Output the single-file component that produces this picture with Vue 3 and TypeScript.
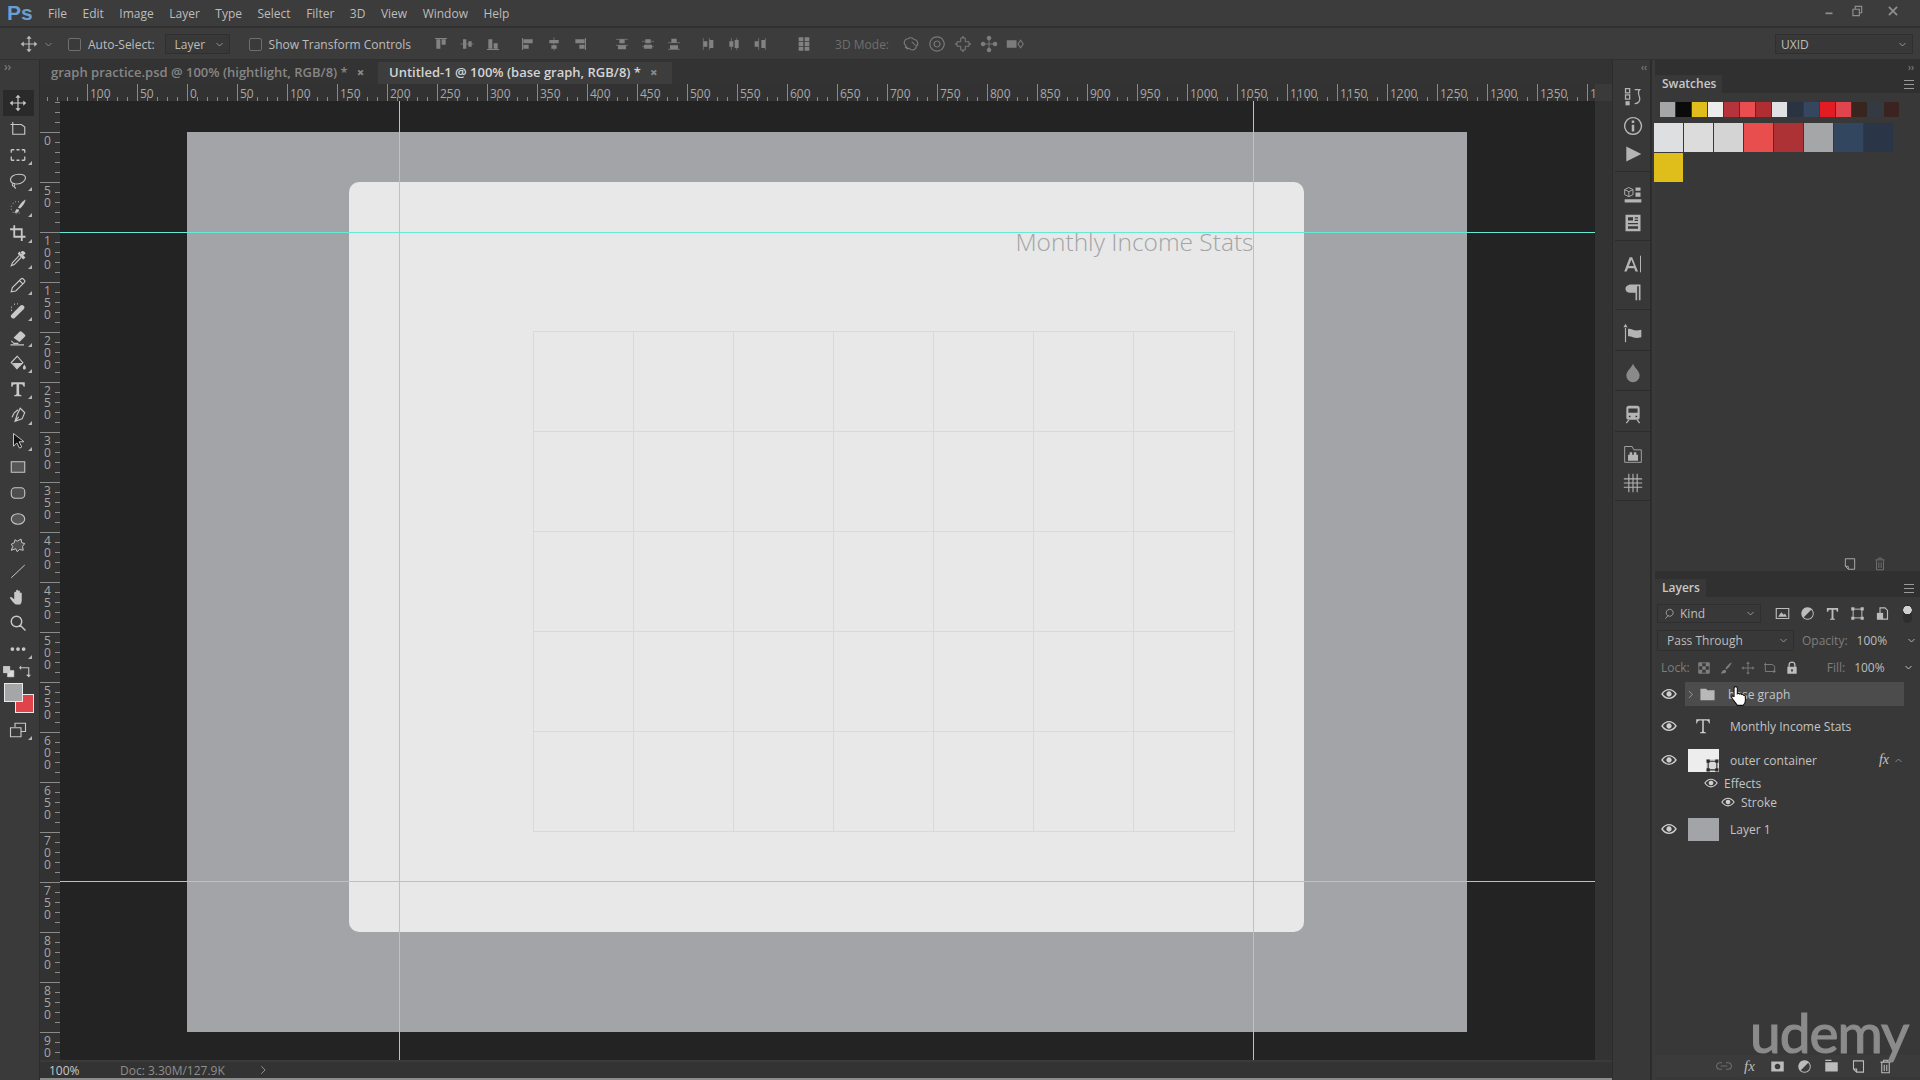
<template>
  <div class="app">
    <!-- menu bar -->
    <header class="menubar">
      <span class="ps-logo">Ps</span>
      <nav class="menu">
        <span v-for="m in menus" :key="m">{{ m }}</span>
      </nav>
      <div class="win-controls">
        <Icon name="winMin" :size="14" />
        <Icon name="winMax" :size="14" />
        <Icon name="winClose" :size="14" class="win-close" />
      </div>
    </header>

    <!-- options bar -->
    <div class="options">
      <Icon name="move" :size="18" class="opt-move" />
      <Icon name="chev" :size="9" class="opt-chev" />
      <span class="check first"></span>
      <span class="opt-label">Auto-Select:</span>
      <div class="select layer-select"><span>Layer</span><Icon name="chev" :size="9" /></div>
      <span class="check"></span>
      <span class="opt-label">Show Transform Controls</span>
      <div v-for="(g, i) in alignGroups" :key="i" class="align-group" :class="'ag' + i">
        <Icon v-for="n in g" :key="n" :name="n" :size="16" />
      </div>
      <span class="mode-label">3D Mode:</span>
      <div class="align-group mode-icons">
        <Icon v-for="n in modeIcons" :key="n" :name="n" :size="18" />
      </div>
      <div class="select workspace"><span>UXID</span><Icon name="chev" :size="9" /></div>
    </div>

    <div class="workspace-row">
      <!-- tools -->
      <aside class="tools">
        <div class="dock-arrows">››</div>
        <div
          v-for="t in tools"
          :key="t.name"
          class="tool"
          :class="{ active: t.name === 'move', more: t.more }"
        >
          <Icon :name="t.name" :size="18" />
        </div>
        <div class="color-mini">
          <Icon name="defaultColors" :size="13" />
          <Icon name="swapColors" :size="13" />
        </div>
        <div class="color-chips">
          <span class="chip bg"></span>
          <span class="chip fg"></span>
        </div>
        <div class="tool more screen"><Icon name="screen" :size="18" /></div>
      </aside>

      <!-- document -->
      <main class="doc-area">
        <div class="tabs">
          <div class="tab">
            <span>graph practice.psd @ 100% (hightlight, RGB/8) *</span><b>×</b>
          </div>
          <div class="tab on">
            <span>Untitled-1 @ 100% (base graph, RGB/8) *</span><b>×</b>
          </div>
        </div>

        <svg class="h-ruler" width="1555" height="17">
          <path :d="hTicks" class="tick" />
          <text v-for="l in hLabels" :key="l.x" :x="l.x + 3" y="14" class="rule-text">{{ l.text }}</text>
        </svg>

        <div class="canvas-row">
          <svg class="v-ruler" width="20" height="959">
            <path :d="vTicks" class="tick" />
            <g v-for="l in vLabels" :key="l.y">
              <text
                v-for="(c, i) in l.text"
                :key="i"
                x="4"
                :y="l.y + 13 + i * 12"
                class="rule-text"
              >{{ c }}</text>
            </g>
          </svg>

          <div class="canvas">
            <div class="document">
              <section class="card">
                <h1 class="card-title">Monthly Income Stats</h1>
                <div class="grid">
                  <i v-for="n in 35" :key="n"></i>
                </div>
              </section>
            </div>
            <span class="guide gv gv1"></span>
            <span class="guide gv gv2"></span>
            <span class="guide gh gh1"></span>
            <span class="guide gh gh2"></span>
          </div>
          <div class="v-scroll"></div>
        </div>

        <footer class="status">
          <span class="zoom">100%</span>
          <span class="doc-size">Doc: 3.30M/127.9K</span>
          <Icon name="chevR" :size="10" class="status-arrow" />
        </footer>
        <div class="bottom-strip"></div>
      </main>

      <!-- collapsed panel icons -->
      <div class="strip">
        <div class="dock-arrows strip-arrows">‹‹</div>
        <div v-for="(g, i) in stripGroups" :key="i" class="strip-group">
          <Icon v-for="n in g" :key="n" :name="n" :size="20" :class="{ 'dim-drop': n === 'drop' }" />
        </div>
      </div>

      <!-- panels -->
      <div class="panels">
        <div class="dock-arrows panels-arrows">››</div>

        <section class="panel swatches">
          <div class="panel-head">
            <span class="panel-tab">Swatches</span>
            <span class="burger"></span>
          </div>
          <div class="swatch-body">
            <div class="swatch-small">
              <i v-for="(c, i) in smallSwatches" :key="i" :style="{ background: c }"></i>
            </div>
            <div class="swatch-big">
              <i v-for="(c, i) in bigSwatches" :key="i" :style="{ background: c }"></i>
            </div>
            <div class="swatch-foot">
              <Icon name="newDoc" :size="14" />
              <Icon name="trash" :size="14" class="dim" />
            </div>
          </div>
        </section>

        <section class="panel layers">
          <div class="panel-head">
            <span class="panel-tab">Layers</span>
            <span class="burger"></span>
          </div>

          <div class="l-row filter-row">
            <div class="select kind">
              <Icon name="search" :size="12" />
              <span>Kind</span>
              <Icon name="chev" :size="9" />
            </div>
            <div class="filter-icons">
              <Icon v-for="n in filterIcons" :key="n" :name="n" :size="15" />
            </div>
            <span class="toggle"></span>
          </div>

          <div class="l-row blend-row">
            <div class="select blend"><span>Pass Through</span><Icon name="chev" :size="9" /></div>
            <span class="l-label opacity">Opacity:</span>
            <span class="pct">100%</span>
            <Icon name="chev" :size="9" />
          </div>

          <div class="l-row lock-row">
            <span class="l-label">Lock:</span>
            <div class="lock-icons">
              <Icon v-for="n in lockIcons" :key="n" :name="n" :size="14" />
            </div>
            <span class="l-label fill">Fill:</span>
            <span class="pct">100%</span>
            <Icon name="chev" :size="9" />
          </div>

          <div class="layer-list">
            <div class="layer selected">
              <Icon name="eye" :size="16" class="eye" />
              <Icon name="chevR" :size="9" class="twisty" />
              <Icon name="folder" :size="17" class="folder" />
              <span class="name base">base graph</span>
              <svg class="pointer" width="18" height="22" viewBox="0 0 16 20">
                <path d="M5 1.5c1 0 1.5.6 1.5 1.5v5l.6-.3c.7-.2 1.2 0 1.5.5.6-.4 1.4-.3 1.8.4.7-.3 1.5 0 1.8.7.8-.2 1.6.3 1.6 1.2v3.5c0 2-1 3.500-2 4.500H6.500L2 12.500c-1-1.200-.8-2.300.2-2.500.7-.1 1.300.3 1.300.8V3c0-.9.600-1.500 1.500-1.500z" fill="#fff" stroke="#111" stroke-width="1" />
              </svg>
            </div>
            <div class="layer">
              <Icon name="eye" :size="16" class="eye" />
              <span class="thumb-t"><Icon name="typeThin" :size="18" /></span>
              <span class="name">Monthly Income Stats</span>
            </div>
            <div class="layer">
              <Icon name="eye" :size="16" class="eye" />
              <span class="thumb light"><Icon name="smart" :size="13" class="thumb-badge" /></span>
              <span class="name">outer container</span>
              <em class="fx">fx</em>
              <Icon name="chevU" :size="9" class="fx-arrow" />
            </div>
            <div class="layer sub">
              <Icon name="eye" :size="14" class="eye sub1" />
              <span>Effects</span>
            </div>
            <div class="layer sub">
              <Icon name="eye" :size="14" class="eye sub2" />
              <span>Stroke</span>
            </div>
            <div class="layer">
              <Icon name="eye" :size="16" class="eye" />
              <span class="thumb grey"></span>
              <span class="name">Layer 1</span>
            </div>
          </div>

          <div class="layers-spacer"></div>
          <div class="layers-foot">
            <Icon name="link" :size="16" class="dim" />
            <em class="foot-fx">fx</em>
            <Icon v-for="n in footIcons" :key="n" :name="n" :size="15" />
          </div>
        </section>
        <span class="watermark">udemy</span>
      </div>
    </div>
  </div>
</template>

<script setup lang="ts">
import { computed, h } from 'vue';

interface IconDef {
  s?: string; // stroked outline
  f?: string; // filled shape
  sfill?: string; // fill under the outline
  w?: number;
}

const icons: Record<string, IconDef> = {
  // tools
  move: { s: 'M12 4v16M4 12h16', f: 'M12 1l3.500 4h-7zM12 23l-3.500-4h7zM1 12l4-3.500v7zM23 12l-4 3.500v-7z', w: 1.6 },
  artboard: { s: 'M2 6h6M5 2.500V19h16V9.500L16.500 6H8', w: 1.5 },
  marquee: { s: 'M3 5h4M10 5h4M17 5h4M3 19h4M10 19h4M17 19h4M3 5v4M3 14v5M21 5v4M21 14v5', w: 1.7 },
  lasso: { s: 'M2 10c0-4 5-7 11-7s9 2 9 5-5 8-11 8-9-2-9-6zM6 15c-2 1-2 4 0 4s2-3 1-4M7 19c0 1 1 2 2 3', w: 1.5 },
  quick: { s: 'M5 7h1M2.500 11h1M2.500 15h1M5 19h1M9 21h1M13 20h1M8 5h1M12 5h1', f: 'M12 13c2-4 6-9 10-11 0 4-4 9-7 12zM10.500 14.500c2 0 3.500 1 2.500 3s-3.500 2.500-6 2c1.500-1 1.500-4 3.500-5z', w: 1.6 },
  crop: { s: 'M7 1.500V17h15M1.500 7H17v15.500', w: 2.4 },
  dropper: { s: 'M13.500 7.500L4.500 17l-1.500 4 4-1.500 9-9.500', f: 'M14 2l8 8-3 2.500-7.500-7.500zM17 1.500c2-1 4.500 1 5 3l-2.500 2.500-5-3z', w: 1.5 },
  pencil: { s: 'M3 21l1.500-5.500L16 4c1-1 2-1 3 0l1.500 1.500c1 1 1 2 0 3L9 20zM14 6l4.500 4.500', w: 1.5 },
  heal: { s: 'M3 7h1M7 3h1M3 11h1M11 2.500h1', f: 'M3.500 16.500L15 5c1.500-1.500 3-1.500 4.500 0s1.500 3 0 4.500L8 21c-1.500 1.500-3 1.500-4.500 0s-1.500-3 0-4.500z', w: 1.7 },
  eraser: { s: 'M3 17l3.500 3.500h6M2 22.500h18', f: 'M6 13l8-8c1-1 2-1 3 0l4 3.500c1 1 1 2 0 3l-7 7z', w: 1.4 },
  bucket: { s: 'M11 3L3 11.500l7.500 8 8-8z', f: 'M5 12h13l-7.500 7.500zM20.500 14c1 2 2 3 2 4.500a2 2 0 0 1-4 0c0-1.500 1-2.500 2-4.500z', w: 1.5 },
  type: { f: 'M3 3h18v6h-1.500c-.5-2.500-1.500-3.500-3.500-3.500h-2.500V18c0 1.500 1 2 3 2v1.500H7V20c2 0 3-.5 3-2V5.500H8C6 5.500 5 6.500 4.500 9H3z' },
  pen: { s: 'M15 3l6 6-3.500 8L8 20.500 11 11zM8 20.500l5-6M4 15l3-6 5-4', w: 1.5 },
  path: { s: 'M6 2v17l4.500-4.500 3.500 7 3-1.500-3.500-7H20z', sfill: '#141414', w: 1.3 },
  rect: { s: 'M3 5h18v14H3z', sfill: '#565656', w: 1.4 },
  rrect: { s: 'M8 5h8a5 5 0 0 1 5 5v4a5 5 0 0 1-5 5H8a5 5 0 0 1-5-5v-4a5 5 0 0 1 5-5z', sfill: '#4e4e4e', w: 1.4 },
  ellipse: { s: 'M12 5c5 0 9 3 9 7s-4 7-9 7-9-3-9-7 4-7 9-7z', sfill: '#565656', w: 1.4 },
  splat: { s: 'M8 5l3 2 5-3 1 5 4 1-3 4 1 5-5-1-3 3-2-4-6 2 2-5-2-3 4-2z', sfill: '#4e4e4e', w: 1.3 },
  line: { s: 'M3 21L21 4', w: 1.3 },
  hand: { f: 'M9 22c-3-2-6-6-8-9 1-1.500 2.500-1 3.500 0L7 15V6c0-1.500 2.500-1.500 2.500 0v5V3.500c0-1.500 2.500-1.500 2.500 0V11V4.500c0-1.500 2.500-1.500 2.500 0V12V7c0-1.500 2.500-1.500 2.500 0v9c0 3-1 5-2 6z' },
  zoom: { s: 'M10 3a7 7 0 1 0 0 14 7 7 0 0 0 0-14zM15 15l7 7', w: 1.9 },
  dots: { f: 'M2 12a2.500 2.500 0 1 0 5 0 2.500 2.500 0 1 0-5 0zM9.500 12a2.500 2.500 0 1 0 5 0 2.500 2.500 0 1 0-5 0zM17 12a2.500 2.500 0 1 0 5 0 2.500 2.500 0 1 0-5 0z' },
  screen: { s: 'M8 8V3h14v11h-6M2 9h14v12H2z', w: 1.5 },
  defaultColors: { s: 'M10 10h12v12H10z', f: 'M2 2h13v13H2z', sfill: '#ddd', w: 1 },
  swapColors: { s: 'M4 5h14v14M14 19h4', f: 'M4 1v8L0 5zM18 23l-4-5h8z', w: 2 },
  // align
  aTop: { f: 'M3 3h18v1.500H3zM5 5h6v14H5zM13 5h6v8h-6z' },
  aMid: { s: 'M2 12h20', f: 'M6 5h5v14H6zM14 8h5v8h-5z', w: 1 },
  aBot: { f: 'M3 19.500h18V21H3zM5 5h6v14H5zM13 11h6v8h-6z' },
  aLeft: { f: 'M3 3h1.500v18H3zM5 5h14v6H5zM5 13h8v6H5z' },
  aCen: { s: 'M12 2v20', f: 'M5 6h14v5H5zM8 14h8v5H8z', w: 1 },
  aRight: { f: 'M19.500 3H21v18h-1.500zM5 5h14v6H5zM11 13h8v6h-8z' },
  dTop: { s: 'M3 5h18M3 14h18', f: 'M8 5h8v6H8zM6 14h12v6H6z', w: 1 },
  dMid: { s: 'M3 8h18M3 16h18', f: 'M8 5h8v6H8zM6 13h12v6H6z', w: 1 },
  dBot: { s: 'M3 10h18M3 20h18', f: 'M8 4h8v6H8zM6 14h12v6H6z', w: 1 },
  dLeft: { s: 'M5 3v18M14 3v18', f: 'M5 8h6v8H5zM14 6h6v12h-6z', w: 1 },
  dCen: { s: 'M8 3v18M16 3v18', f: 'M5 8h6v8H5zM13 6h6v12h-6z', w: 1 },
  dRight: { s: 'M10 3v18M20 3v18', f: 'M4 8h6v8H4zM14 6h6v12h-6z', w: 1 },
  autoAlign: { f: 'M4 2h7v6H4zM13 2h7v6h-7zM4 9h7v6H4zM13 9h7v6h-7zM4 16h7v6H4zM13 16h7v6h-7z' },
  // 3d
  orbit: { s: 'M5 14a5 5 0 0 1 3-9 5.500 5.500 0 0 1 8 1 5 5 0 0 1 3 9 5 5 0 0 1-9 3 5 5 0 0 1-5-4zM4 16l4 3M13 9l5 5', w: 1.4 },
  roll: { s: 'M12 2.500a9.500 9.500 0 1 0 .1 0M12 8a4 4 0 1 0 .1 0', w: 1.5 },
  pan3d: { s: 'M9 4h6v5h5v6h-5v5H9v-5H4V9h5z', f: 'M12 1l2 2.500h-4zM12 23l-2-2.500h4zM1 12l2.500-2v4zM23 12l-2.500 2v-4z', w: 1.3 },
  slide3d: { s: 'M12 5v14M5 12h14', f: 'M12 1a3 3 0 1 0 .1 0M12 17a3 3 0 1 0 .1 0M4 9a3 3 0 1 0 .1 0M20 9a3 3 0 1 0 .1 0', w: 1.2 },
  cam3d: { s: 'M19.500 7L23 12l-3.500 5-3.500-5z', f: 'M1 7h13v10H1z', w: 1.4 },
  // strip
  history: { s: 'M3 2h5v5H3zM3 9.500h5v5H3zM14 3h6c-3 3-1 7 0 10 1 4-2 7-6 7', f: 'M3 17h5v5H3z', w: 1.5 },
  info: { s: 'M12 2a10 10 0 1 0 .1 0', f: 'M10.500 5.500h3v3h-3zM10.500 10.500h3v8h-3z', w: 1.7 },
  play: { f: 'M4 3l18 9-18 9z' },
  cube: { s: 'M7 3l5 2.500v6L7 14l-5-2.500v-6zM2 5.500L7 8l5-2.500M7 8v6', f: 'M15 3h6v4h-6zM15 9h6v5h-6zM2 17h20v4H2z', w: 1.1 },
  props: { f: 'M3 2h18v20H3zM6 5v4h6V5zM14 5v1.500h4V5zM14 8v1.500h4V8zM6 12v1.500h12V12zM6 16v3h12v-3z' },
  charA: { s: 'M21 2v20', f: 'M8 4h3l7 17h-3l-1.500-4H6l-1.500 4h-3zM7 14.500h6L10 7z', w: 1.2 },
  para: { f: 'M10 3h11v19h-2V5h-2v17h-2V13h-5C4 13 3 10 3 8s2-5 7-5z' },
  flag: { s: 'M3 6v17', f: 'M3 1l2.500 4h-5zM6 7c5 0 6 2 10 2 2 0 4-.5 6-1v9c-2 .5-4 1-6 1-4 0-5-2-10-2z', w: 1.4 },
  drop: { f: 'M12 1c2 5 8 9 8 14a8 8 0 0 1-16 0c0-5 6-9 8-14z' },
  train: { s: 'M4 23l3-4M20 23l-3-4', f: 'M7 2h10c2 0 3 1 3 3v11c0 2-1 3-3 3H7c-2 0-3-1-3-3V5c0-2 1-3 3-3zM6.500 5.500v5h11v-5zM7 14v2h2v-2zM15 14v2h2v-2z', w: 1.6 },
  bagFolder: { s: 'M2 3h9l2 4h9v15H2z', f: 'M6 13h12v7H6zM8 10h3v3H8zM13 10h3v3h-3z', w: 1 },
  gridOn: { s: 'M1 7h22M1 12h22M1 17h22M7 1v22M12 1v22M17 1v22', w: 1.3 },
  // layers
  search: { s: 'M14 3a7 7 0 1 0 0 13 7 7 0 0 0 0-13zM9 14l-6 7', w: 2 },
  fImg: { s: 'M2 4h20v16H2z', f: 'M5 17l5-7 4 4 2-2 3 5z', w: 1.8 },
  fAdj: { f: 'M12 2a10 10 0 1 0 .1 0zM18 6L6 18a8 8 0 0 0 12-12z' },
  fText: { f: 'M3 3h18v6h-2c-.5-2-1-3-3-3h-2.500v13c0 1 1 1.500 2.500 1.500V22H8v-1.500c1.500 0 2.500-.5 2.500-1.500V6H8c-2 0-2.500 1-3 3H3z' },
  fShape: { s: 'M5 5h14v14H5z', f: 'M2 2h5v5H2zM17 2h5v5h-5zM2 17h5v5H2zM17 17h5v5h-5z', w: 1.6 },
  fSmart: { s: 'M8 11V3h8l4 4v14h-8', f: 'M3 11h10v11H3z', w: 1.8 },
  lChecker: { s: 'M3 3h18v18H3z', f: 'M3 3h6v6H3zM15 3h6v6h-6zM9 9h6v6H9zM3 15h6v6H3zM15 15h6v6h-6z', w: 1.5 },
  lBrush: { f: 'M11 13C14 8 18 4 22 2c-1 4-5 9-9 12.500zM9 15c2 0 4 1.500 3 4s-5 3-9 2c2-1 2-5 6-6z' },
  lMove: { s: 'M12 4v16M4 12h16', f: 'M12 1l3 3.500H9zM12 23l-3-3.500h6zM1 12l3.500-3v6zM23 12l-3.500 3V9z', w: 1.4 },
  lArt: { s: 'M2 6h5M4 3v15h16V9l-4-3H7', f: 'M18 15l4 3-4 3z', w: 1.6 },
  lLock: { s: 'M7 11V7a5 5 0 0 1 10 0v4', f: 'M4 10h16v12H4zM10.500 14v4h3v-4z', w: 2.2 },
  eye: { s: 'M1.500 12C5 7 9 5.500 12 5.500s7 1.500 10.500 6.500c-3.500 5-7.500 6.500-10.500 6.500S5 17 1.500 12z', f: 'M12 8a4 4 0 1 0 .1 0z', w: 2 },
  folder: { f: 'M2 4h8l2 2h10v14H2z' },
  typeThin: { f: 'M3 3h18v5.500h-1c-.5-2.500-1.500-4-3.500-4H13V19c0 1 1 1.500 3 1.500v1H8v-1c2 0 3-.5 3-1.500V4.500H7.500c-2 0-3 1.500-3.500 4H3z' },
  smart: { s: 'M4 4h16v16H4z', f: 'M1 1h6v6H1zM17 1h6v6h-6zM1 17h6v6H1zM17 17h6v6h-6z', sfill: 'none', w: 2 },
  link: { s: 'M9 7H6a5 5 0 0 0 0 10h3M15 7h3a5 5 0 0 1 0 10h-3M7 12h10', w: 1.6 },
  mask: { f: 'M2 4h20v16H2zM12 7.500a4.500 4.500 0 1 0 .1 0z' },
  newFolder: { f: 'M2 5h20v15H2zM2 1h10v2H2z' },
  newDoc: { s: 'M4 3h16v18H9l-5-5zM4 16h5v5', w: 1.7 },
  trash: { s: 'M4 5h16M9 5V2h6v3M6 6v16h12V6M10 9v10M14 9v10', w: 1.7 },
  // small glyphs
  chev: { s: 'M4 8l8 8 8-8', w: 2.5 },
  chevR: { s: 'M8 3l9 9-9 9', w: 2.2 },
  chevU: { s: 'M4 16l8-8 8 8', w: 2.5 },
  winMin: { s: 'M6 16h12', w: 3 },
  winMax: { s: 'M5 9h11v11H5zM9 9V4h11v11h-4', w: 2 },
  winClose: { s: 'M5 5l14 14M19 5L5 19', w: 3 },
};

const Icon = (p: { name: string; size?: number }) => {
  const def = icons[p.name];
  const size = p.size ?? 18;
  const kids = [];
  if (def.s) {
    kids.push(h('path', { d: def.s, fill: def.sfill ?? 'none', stroke: 'currentColor', 'stroke-width': def.w ?? 1.5 }));
  }
  if (def.f) {
    kids.push(h('path', { d: def.f, fill: 'currentColor', 'fill-rule': 'evenodd' }));
  }
  return h('svg', { width: size, height: size, viewBox: '0 0 24 24' }, kids);
};
Icon.props = ['name', 'size'];

const menus = ['File', 'Edit', 'Image', 'Layer', 'Type', 'Select', 'Filter', '3D', 'View', 'Window', 'Help'];

const alignGroups = [
  ['aTop', 'aMid', 'aBot'],
  ['aLeft', 'aCen', 'aRight'],
  ['dTop', 'dMid', 'dBot'],
  ['dLeft', 'dCen', 'dRight'],
  ['autoAlign'],
];
const modeIcons = ['orbit', 'roll', 'pan3d', 'slide3d', 'cam3d'];

const tools = [
  { name: 'move', more: false },
  { name: 'artboard', more: false },
  { name: 'marquee', more: true },
  { name: 'lasso', more: true },
  { name: 'quick', more: true },
  { name: 'crop', more: true },
  { name: 'dropper', more: true },
  { name: 'pencil', more: true },
  { name: 'heal', more: true },
  { name: 'eraser', more: true },
  { name: 'bucket', more: true },
  { name: 'type', more: true },
  { name: 'pen', more: true },
  { name: 'path', more: true },
  { name: 'rect', more: false },
  { name: 'rrect', more: false },
  { name: 'ellipse', more: false },
  { name: 'splat', more: false },
  { name: 'line', more: false },
  { name: 'hand', more: false },
  { name: 'zoom', more: false },
  { name: 'dots', more: true },
];

const stripGroups = [
  ['history', 'info', 'play'],
  ['cube', 'props'],
  ['charA', 'para'],
  ['flag'],
  ['drop'],
  ['train'],
  ['bagFolder', 'gridOn'],
];

const smallSwatches = [
  '#a5a6a8', '#0b0b0c', '#dfbe1c', '#ececec', '#b5333c', '#e94d50', '#b02e32', '#dfe1e5',
  '#2a3342', '#34475f', '#e31b23', '#e0444c', '#38251f', '#343a42', '#3a2320',
];
const bigSwatches = [
  '#dddfe0', '#dcdcdc', '#d4d4d4', '#e84e4e', '#ad3236', '#a5a6a8', '#324660', '#2b3548', '#dfbe1c',
];

const filterIcons = ['fImg', 'fAdj', 'fText', 'fShape', 'fSmart'];
const lockIcons = ['lChecker', 'lBrush', 'lMove', 'lArt', 'lLock'];
const footIcons = ['mask', 'fAdj', 'newFolder', 'newDoc', 'trash'];

// rulers: 1 unit = 1px, zero sits on the document's corner
const H_ZERO = 147;
const V_ZERO = 31;

const hTicks = computed(() => {
  let d = '';
  for (let x = H_ZERO % 10; x < 1555; x += 10) {
    const long = (x - H_ZERO) % 50 === 0;
    d += `M${x + 0.5} ${long ? 0 : 13}V17`;
  }
  return d;
});

const vTicks = computed(() => {
  let d = '';
  for (let y = V_ZERO % 10; y < 959; y += 10) {
    const long = (y - V_ZERO) % 50 === 0;
    d += `M${long ? 0 : 15} ${y + 0.5}H20`;
  }
  return d;
});

const hLabels = computed(() => {
  const out: { x: number; text: string }[] = [];
  for (let v = -100; v <= 1400; v += 50) {
    out.push({ x: H_ZERO + v, text: String(Math.abs(v)) });
  }
  return out;
});

const vLabels = computed(() => {
  const out: { y: number; text: string }[] = [];
  for (let v = 0; v <= 900; v += 50) {
    out.push({ y: V_ZERO + v, text: String(v) });
  }
  return out;
});
</script>

<style>
html,
body {
  margin: 0;
  background: #3a3a3a;
}
</style>

<style scoped>
.app {
  width: 1920px;
  height: 1080px;
  overflow: hidden;
  display: flex;
  flex-direction: column;
  background: #3a3a3a;
  color: #c4c4c4;
  font-family: "Open Sans", "Liberation Sans", sans-serif;
  font-size: 12px;
}

svg {
  display: block;
  flex: none;
}

/* menu bar */
.menubar {
  height: 26px;
  flex: none;
  display: flex;
  align-items: center;
  background: #3c3c3c;
  border-bottom: 2px solid #303030;
}
.ps-logo {
  width: 48px;
  padding-left: 7px;
  box-sizing: border-box;
  font: 700 21px "Liberation Sans", sans-serif;
  color: #6a9fd0;
}
.menu {
  display: flex;
  gap: 15.5px;
  color: #bdbdbd;
}
.win-controls {
  margin-left: auto;
  margin-top: -4px;
  display: flex;
  gap: 14px;
  padding-right: 20px;
  color: #8e8e8e;
}
.win-close {
  margin-left: 8px;
}

/* options bar */
.options {
  height: 32px;
  flex: none;
  display: flex;
  align-items: center;
  background: #3c3c3c;
  border-bottom: 1px solid #303030;
  box-sizing: border-box;
  padding-top: 1px;
  color: #bdbdbd;
}
.opt-move {
  margin-left: 20px;
}
.opt-chev {
  margin-left: 6px;
  color: #8a8a8a;
}
.check {
  width: 11px;
  height: 11px;
  margin-left: 19px;
  margin-right: 7px;
  border: 1px solid #6e6e6e;
  border-radius: 2px;
  background: #3a3a3a;
}
.check.first {
  margin-left: 15px;
}
.select {
  display: flex;
  align-items: center;
  justify-content: space-between;
  height: 20px;
  padding: 0 5px 0 9px;
  box-sizing: border-box;
  background: #383838;
  border: 1px solid #2f2f2f;
  color: #bdbdbd;
}
.select svg {
  color: #9a9a9a;
}
.layer-select {
  width: 65px;
  margin-left: 10px;
}
.align-group {
  display: flex;
  gap: 10px;
  color: #828282;
}
.ag0 {
  margin-left: 22px;
}
.ag1 {
  margin-left: 19px;
}
.ag2 {
  margin-left: 26px;
}
.ag3 {
  margin-left: 18px;
}
.ag4 {
  margin-left: 28px;
}
.mode-label {
  margin-left: 23px;
  color: #6f6f6f;
}
.mode-icons {
  margin-left: 13px;
  gap: 8px;
  color: #7c7c7c;
}
.workspace {
  margin-left: auto;
  margin-right: 7px;
  width: 138px;
  padding-left: 5px;
}

.workspace-row {
  flex: 1;
  min-height: 0;
  display: flex;
}

.dock-arrows {
  height: 16px;
  line-height: 14px;
  font-size: 12px;
  color: #8a8a8a;
  padding-left: 4px;
}

/* tools */
.tools {
  width: 40px;
  flex: none;
  box-sizing: border-box;
  display: flex;
  flex-direction: column;
  align-items: center;
  background: #3a3a3a;
  border-right: 1px solid #2c2c2c;
  color: #c8c8c8;
}
.tools .dock-arrows {
  width: 100%;
  box-sizing: border-box;
  height: 30px;
}
.tool {
  width: 31px;
  height: 26px;
  flex: none;
  display: flex;
  align-items: center;
  justify-content: center;
  position: relative;
  margin-right: 3px;
}
.tool.active {
  background: #2a2a2a;
}
.tool.more::after {
  content: "";
  position: absolute;
  right: 2px;
  bottom: 3px;
  border-style: solid;
  border-width: 0 0 4px 4px;
  border-color: transparent transparent #b5b5b5 transparent;
}
.color-mini {
  width: 30px;
  display: flex;
  justify-content: space-between;
  margin: 3px 5px 0 0;
}
.color-chips {
  position: relative;
  width: 30px;
  height: 30px;
  margin: 5px 2px 0 0;
}
.chip {
  position: absolute;
  width: 17px;
  height: 17px;
  border: 1px solid #e8e8e8;
}
.chip.bg {
  right: 0;
  bottom: 0;
  background: #e0444a;
}
.chip.fg {
  left: 0;
  top: 0;
  background: #a5a6a8;
}
.screen {
  margin-top: 4px;
}

/* document area */
.doc-area {
  width: 1572px;
  flex: none;
  display: flex;
  flex-direction: column;
}
.tabs {
  height: 24px;
  flex: none;
  display: flex;
  background: #333333;
  padding-top: 2px;
  box-sizing: border-box;
}
.tab {
  display: flex;
  align-items: center;
  font-size: 13px;
  font-weight: 600;
  color: #868686;
  padding: 0 8px 2px 11px;
  gap: 9px;
  width: 338px;
  box-sizing: border-box;
  white-space: nowrap;
}
.tab b {
  font-size: 13px;
  color: #8a8a8a;
}
.tab.on {
  width: 294px;
  background: #3d3d3d;
  color: #d4d4d4;
}
.h-ruler {
  background: #323232;
  flex: none;
}
.tick {
  stroke: #8a8a8a;
  stroke-width: 1;
  fill: none;
}
.rule-text {
  font: 12px "Open Sans", sans-serif;
  fill: #a8a8a8;
}
.canvas-row {
  height: 959px;
  flex: none;
  display: flex;
}
.v-ruler {
  background: #323232;
}
.canvas {
  position: relative;
  width: 1535px;
  flex: none;
  background: #232323;
  padding: 31px 2px 0 0;
  box-sizing: border-box;
  display: flex;
  justify-content: center;
  overflow: hidden;
}
.document {
  width: 1280px;
  height: 900px;
  flex: none;
  background: #a3a4a8;
  padding: 50px 0 0 162px;
  box-sizing: border-box;
}
.card {
  width: 955px;
  height: 750px;
  box-sizing: border-box;
  background: #e8e8e8;
  border-radius: 10px;
  padding: 42px 50px 0 184px;
}
.card-title {
  margin: 0;
  height: 107px;
  text-align: right;
  font: 300 24.5px "Open Sans", sans-serif;
  color: #a2a4a6;
  line-height: 36px;
}
.grid {
  width: 701px;
  display: grid;
  grid-template-columns: repeat(7, 100px);
  grid-auto-rows: 100px;
  border-right: 1px solid #d9d9d9;
  border-bottom: 1px solid #d9d9d9;
}
.grid i {
  border-top: 1px solid #d9d9d9;
  border-left: 1px solid #d9d9d9;
}
.guide {
  position: absolute;
  background: #66ead6;
}
.gv {
  top: 0;
  bottom: 0;
  width: 1px;
}
.gh {
  left: 0;
  right: 0;
  height: 1px;
}
.gv1 {
  left: 339px;
}
.gv2 {
  left: 1193px;
}
.gh1 {
  top: 131px;
}
.gh2 {
  top: 780px;
}
.v-scroll {
  flex: 1;
  background: #333333;
}
.status {
  height: 16px;
  margin-top: 2px;
  flex: none;
  display: flex;
  align-items: center;
  background: #333333;
  padding-left: 9px;
  color: #8e8e8e;
}
.zoom {
  width: 71px;
  color: #c8c8c8;
}
.status-arrow {
  margin-left: 33px;
  color: #9a9a9a;
}
.bottom-strip {
  height: 2px;
  flex: none;
  background: #8c8c8c;
}

/* collapsed icon strip */
.strip {
  width: 40px;
  flex: none;
  box-sizing: border-box;
  background: #383838;
  border-left: 1px solid #2c2c2c;
  border-right: 2px solid #2c2c2c;
  padding-left: 2px;
  color: #b4b4b4;
}
.strip-arrows {
  height: 27px;
  text-align: right;
  padding: 0 3px 0 0;
  font-size: 10px;
}
.strip-group {
  display: flex;
  flex-direction: column;
  align-items: center;
  gap: 8.5px;
  padding: 0 0 7px;
  margin-bottom: 12.5px;
  border-bottom: 1px solid #2c2c2c;
}
.dim-drop {
  color: #8a8a8a;
}

/* panels */
.panels {
  flex: 1;
  position: relative;
  display: flex;
  flex-direction: column;
  margin-left: 3px;
  background: #303030;
}
.panels-arrows {
  height: 15px;
  text-align: right;
  padding: 0 6px 0 0;
  font-size: 10px;
}
.panel {
  display: flex;
  flex-direction: column;
  background: #383838;
}
.panel-head {
  display: flex;
  align-items: stretch;
  justify-content: space-between;
  height: 18px;
  flex: none;
  background: #303030;
}
.panel-tab {
  padding: 0 6px 0 7px;
  background: #383838;
  font-weight: 600;
  color: #c8c8c8;
  line-height: 18px;
}
.burger {
  width: 10px;
  height: 7px;
  margin: 5px 6px 0 0;
  border-top: 1px solid #999;
  border-bottom: 1px solid #999;
  position: relative;
}
.burger::after {
  content: "";
  position: absolute;
  left: 0;
  right: 0;
  top: 3px;
  height: 1px;
  background: #999;
}
.swatches {
  height: 496px;
  flex: none;
}
.swatch-body {
  flex: 1;
  display: flex;
  flex-direction: column;
}
.swatch-small {
  display: flex;
  gap: 1px;
  padding: 9px 0 6px 5px;
}
.swatch-small i {
  width: 15px;
  height: 15px;
}
.swatch-big {
  display: grid;
  grid-template-columns: repeat(8, 29px);
  grid-auto-rows: 29px;
  gap: 1px;
  margin-left: -1px;
}
.swatch-foot {
  margin-top: auto;
  height: 14px;
  display: flex;
  justify-content: flex-end;
  align-items: center;
  gap: 16px;
  padding-right: 33px;
  color: #a8a8a8;
}
.dim {
  color: #6e6e6e;
}
.layers {
  flex: 1;
  margin-top: 8px;
  min-height: 0;
}
.l-row {
  display: flex;
  align-items: center;
  flex: none;
}
.filter-row {
  height: 27px;
  padding: 6px 0 0 2px;
  box-sizing: border-box;
}
.kind {
  width: 104px;
  height: 19px;
  padding-left: 6px;
}
.kind span {
  margin-left: 4px;
  margin-right: auto;
}
.filter-icons {
  display: flex;
  gap: 10px;
  margin-left: 14px;
  color: #bcbcbc;
}
.toggle {
  width: 9px;
  height: 18px;
  margin-left: 13px;
  border-radius: 5px;
  background: radial-gradient(circle at 50% 5px, #d0d0d0 4px, #2e2e2e 4.500px);
}
.blend-row {
  height: 27px;
  margin-top: 3px;
  padding-left: 2px;
  color: #bdbdbd;
}
.blend {
  width: 137px;
  height: 21px;
}
.l-label {
  color: #7d7d7d;
}
.opacity {
  margin-left: 8px;
}
.pct {
  margin-left: 9px;
  margin-right: 17px;
  width: 33px;
  color: #bdbdbd;
}
.lock-row {
  height: 27px;
  padding-left: 6px;
}
.lock-icons {
  display: flex;
  gap: 8px;
  margin-left: 7px;
  color: #7f7f7f;
}
.lock-icons svg:last-child {
  color: #bdbdbd;
}
.fill {
  margin-left: 28px;
}
.layer-list {
  width: 249px;
  display: grid;
  grid-template-rows: 24px 40px 28px 18px 20px 34px;
  flex: none;
  margin-top: 1px;
}
.layer {
  display: flex;
  align-items: center;
  position: relative;
  color: #c4c4c4;
}
.eye {
  position: absolute;
  left: 6px;
  color: #cfcfcf;
}
.selected::before {
  content: "";
  position: absolute;
  left: 30px;
  right: 0;
  top: 0;
  bottom: 0;
  background: #4c4c4c;
}
.twisty {
  position: relative;
  margin-left: 31px;
  color: #a8a8a8;
}
.folder {
  position: relative;
  margin-left: 4px;
  color: #b8b8b8;
}
.name {
  position: absolute;
  left: 75px;
}
.name.base {
  left: 73px;
}
.pointer {
  position: absolute;
  left: 75px;
  top: 3px;
}
.thumb-t {
  position: absolute;
  left: 39px;
  color: #d0d0d0;
}
.thumb {
  position: absolute;
  left: 33px;
  width: 31px;
  height: 23px;
}
.thumb.light {
  background: #ededed;
}
.thumb-badge {
  position: absolute;
  right: 0;
  bottom: 0;
  color: #2a2a2a;
  background: #d9d9d9;
}
.thumb.grey {
  background: #a3a4a8;
}
.fx {
  position: absolute;
  right: 15px;
  font: italic 14px "Liberation Serif", serif;
  color: #c4c4c4;
}
.fx-arrow {
  position: absolute;
  right: 1px;
  color: #8a8a8a;
}
.sub {
  font-size: 12px;
}
.sub1 {
  left: 49px;
}
.sub2 {
  left: 66px;
}
.sub1 + span {
  margin-left: 69px;
}
.sub2 + span {
  margin-left: 86px;
}
.layers-spacer {
  flex: 1;
}
.layers-foot {
  height: 22px;
  flex: none;
  margin-bottom: 3px;
  display: flex;
  align-items: center;
  gap: 12px;
  padding-left: 61px;
  background: #3b3b3b;
  color: #bcbcbc;
}
.foot-fx {
  width: 14px;
  font: italic 15px "Liberation Serif", serif;
}
.watermark {
  position: absolute;
  left: 95px;
  top: 945px;
  font: 400 55px/1 Lato, sans-serif;
  letter-spacing: -1px;
  -webkit-text-stroke: 1.2px #8b8b8b;
  color: #8b8b8b;
  pointer-events: none;
}
</style>
